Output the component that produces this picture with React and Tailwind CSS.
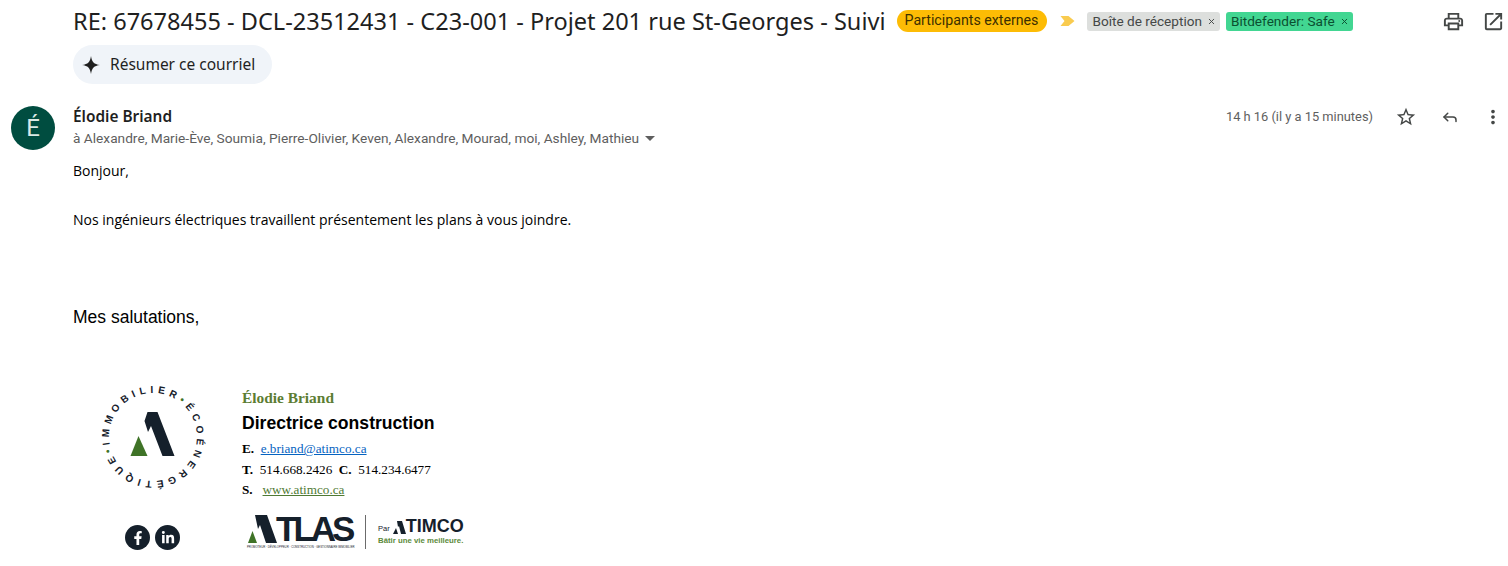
import React from "react";
import { Reply, X } from "lucide-react";
import { MdOutlinePrint, MdOpenInNew, MdStarBorder, MdMoreVert } from "react-icons/md";
import { FaFacebookF, FaLinkedinIn } from "react-icons/fa";

const Tag = ({ label, className }) => (
  <span className={`flex items-center h-[19px] rounded-[3px] pl-[5px] pr-[4px] gap-[5px] text-[13.6px] ${className}`}>
    {label}
    <X size={9} strokeWidth={2.5} />
  </span>
);

function CircleLogo() {
  return (
    <svg width="110" height="110" viewBox="0 0 110 110" className="block">
      <defs>
        <path id="ring" d="M11 55 a44 44 0 1 1 88 0 a44 44 0 1 1 -88 0" />
      </defs>
      <g transform="rotate(-10 55 55)">
        <text fontFamily="Liberation Sans, sans-serif" fontSize="10" fontWeight="700" fill="#15202b" textLength="272" lengthAdjust="spacing">
          <textPath href="#ring">
            IMMOBILIER<tspan fill="#3f7327">•</tspan>ÉCOÉNERGÉTIQUE<tspan fill="#3f7327">•</tspan>
          </textPath>
        </text>
      </g>
      <path d="M49.5 30 L59.5 30 L76.5 74 L64.5 74 L53 44 L50 50 L46.5 39 Z" fill="#15202b" />
      <path d="M40.5 54 L32.5 74 L49.5 74 Z" fill="#3f7327" />
    </svg>
  );
}

export default function App() {
  return (
    <div className="w-[1508px] h-[566px] overflow-hidden bg-white font-['Roboto',sans-serif] text-[#1f1f1f]">
      {/* Subject */}
      <div className="flex items-center h-[42px] pl-[73px] pr-[3px]">
        <h1 className="font-['Noto_Sans',sans-serif] text-[23.55px] leading-[28px] whitespace-nowrap -mt-[1px]">
          RE: 67678455 - DCL-23512431 - C23-001 - Projet 201 rue St-Georges - Suivi
        </h1>
        <span className="ml-[11px] flex items-center h-[22px] pl-2 pr-[9px] rounded-full bg-[#fdbc05] text-[14.2px] text-[#3c3000]">
          Participants externes
        </span>
        <svg className="ml-[13px]" width="15" height="10" viewBox="0 0 14 10">
          <path d="M0 0 H8 L14 5 L8 10 H0 L4 5 Z" fill="#f9cb4f" />
        </svg>
        <Tag label="Boîte de réception" className="ml-[12px] bg-[#dddfdd] text-[#444746]" />
        <Tag label="Bitdefender: Safe" className="ml-[6px] bg-[#42d692] text-[#0b4f30]" />
        <div className="ml-auto flex items-center gap-[17px] text-[#444746]">
          <MdOutlinePrint size={23} />
          <MdOpenInNew size={23} />
        </div>
      </div>

      {/* Summary button */}
      <div className="pl-[73px] mt-[3px]">
        <button className="flex items-center w-[199px] h-[39px] rounded-[20px] bg-[#f0f4f9] pl-[9px] gap-[10px] text-[15.5px] font-['Noto_Sans',sans-serif]">
          <svg width="18" height="18" viewBox="0 0 18 18">
            <path d="M9 0 C9.8 6 12 8.2 18 9 C12 9.8 9.8 12 9 18 C8.2 12 6 9.8 0 9 C6 8.2 8.2 6 9 0 Z" fill="#1f1f1f" />
          </svg>
          Résumer ce courriel
        </button>
      </div>

      {/* Message */}
      <div className="flex mt-[22px]">
        <div className="ml-[11px] w-[44px] h-[44px] rounded-full bg-[#004d40] text-[#dbe9e5] flex items-center justify-center text-[24px]">
          É
        </div>
        <div className="ml-[18px] flex-1">
          <div className="flex justify-between items-start h-[21px] pt-[1px] pr-[4px]">
            <span className="font-['Noto_Sans',sans-serif] font-semibold text-[15.4px] leading-[20px]">Élodie Briand</span>
            <div className="flex items-center -mt-[1px] text-[#444746]">
              <span className="text-[12.85px] text-[#5e5e5e] mr-[22px]">14 h 16 (il y a 15 minutes)</span>
              <MdStarBorder size={22} />
              <Reply size={18} strokeWidth={2} className="ml-[24px]" />
              <MdMoreVert size={22} className="ml-[23px]" />
            </div>
          </div>
          <div className="flex items-center h-[22px] text-[13.7px] text-[#5e5e5e]">
            à Alexandre, Marie-Ève, Soumia, Pierre-Olivier, Keven, Alexandre, Mourad, moi, Ashley, Mathieu
            <svg className="ml-[6px]" width="10" height="5" viewBox="0 0 10 5">
              <path d="M0 0 H10 L5 5 Z" fill="#5e5e5e" />
            </svg>
          </div>

          {/* Body */}
          <div className="mt-[10px] font-['Open_Sans',sans-serif] text-[14px] text-black leading-[24px]">
            <p>Bonjour,</p>
            <p className="mt-[25px]">Nos ingénieurs électriques travaillent présentement les plans à vous joindre.</p>
          </div>
          <p className="mt-[73px] font-['Liberation_Sans',sans-serif] text-[17.5px] leading-[24px] text-black">Mes salutations,</p>

          {/* Signature */}
          <div className="flex mt-[60px]">
            <div className="w-[169px] -mt-[7px] pl-[25px] flex flex-col items-start">
              <CircleLogo />
              <div className="flex gap-[5px] mt-[33px] ml-[27px]">
                <span className="w-[25px] h-[25px] rounded-full bg-[#15202b] text-white flex items-center justify-center">
                  <FaFacebookF size={14} />
                </span>
                <span className="w-[25px] h-[25px] rounded-full bg-[#15202b] text-white flex items-center justify-center">
                  <FaLinkedinIn size={14} />
                </span>
              </div>
            </div>
            <div className="font-['Liberation_Serif',serif] text-[13.2px] text-black">
              <div className="text-[15.4px] font-bold leading-[18px] text-[#5c7d33]">Élodie Briand</div>
              <div className="mt-[5px] font-['Liberation_Sans',sans-serif] text-[17.6px] font-bold leading-[22px]">Directrice construction</div>
              <div className="mt-[5px] leading-[20px]">
                <b>E.</b>&nbsp; <a className="underline text-[#0563c1]">e.briand@atimco.ca</a>
              </div>
              <div className="leading-[21px]">
                <b>T.</b>&nbsp; 514.668.2426 &nbsp;<b>C.</b>&nbsp; 514.234.6477
              </div>
              <div className="leading-[20px]">
                <b>S.</b>&nbsp;&nbsp; <a className="underline text-[#4f7a33]">www.atimco.ca</a>
              </div>
              <div className="flex items-start mt-[15px] font-['Liberation_Sans',sans-serif]">
                <div className="w-[110px] ml-[5px]">
                  <div className="flex items-end h-[28px]">
                    <svg width="30" height="28" viewBox="0 0 30 28" className="shrink-0">
                      <path d="M8 0 H20 L30 28 H19 L13 10 L11 14 Z" fill="#15202b" />
                      <path d="M5.5 16 L1 28 H10 Z" fill="#3f7327" />
                    </svg>
                    <span className="text-[35px] leading-[28px] font-bold text-[#15202b] tracking-[-4px] -ml-[1px]">TLAS</span>
                  </div>
                  <div className="mt-[2px] text-[2.8px] leading-[4px] whitespace-nowrap text-[#15202b]">PROMOTEUR · DÉVELOPPEUR · CONSTRUCTION · GESTIONNAIRE IMMOBILIER</div>
                </div>
                <div className="w-px h-[34px] bg-[#6b6b6b] ml-[8px]"></div>
                <div className="ml-[12px] mt-[4px]">
                  <div className="flex items-end text-[#15202b] h-[15px]">
                    <span className="text-[7.5px] leading-[10px] mr-[3px]">Par</span>
                    <svg width="13" height="13" viewBox="0 0 13 13" className="shrink-0">
                      <path d="M4 0 H9 L13 13 H8 L6 5 L5 6 Z" fill="#15202b" />
                      <path d="M3 7 L0 13 H5 Z" fill="#15202b" />
                    </svg>
                    <span className="text-[18px] leading-[15px] font-bold">TIMCO</span>
                  </div>
                  <div className="mt-[2px] text-[7.8px] leading-[10px] font-bold text-[#5c8a3a] whitespace-nowrap">Bâtir une vie meilleure.</div>
                </div>
              </div>
            </div>
          </div>
        </div>
      </div>
    </div>
  );
}
